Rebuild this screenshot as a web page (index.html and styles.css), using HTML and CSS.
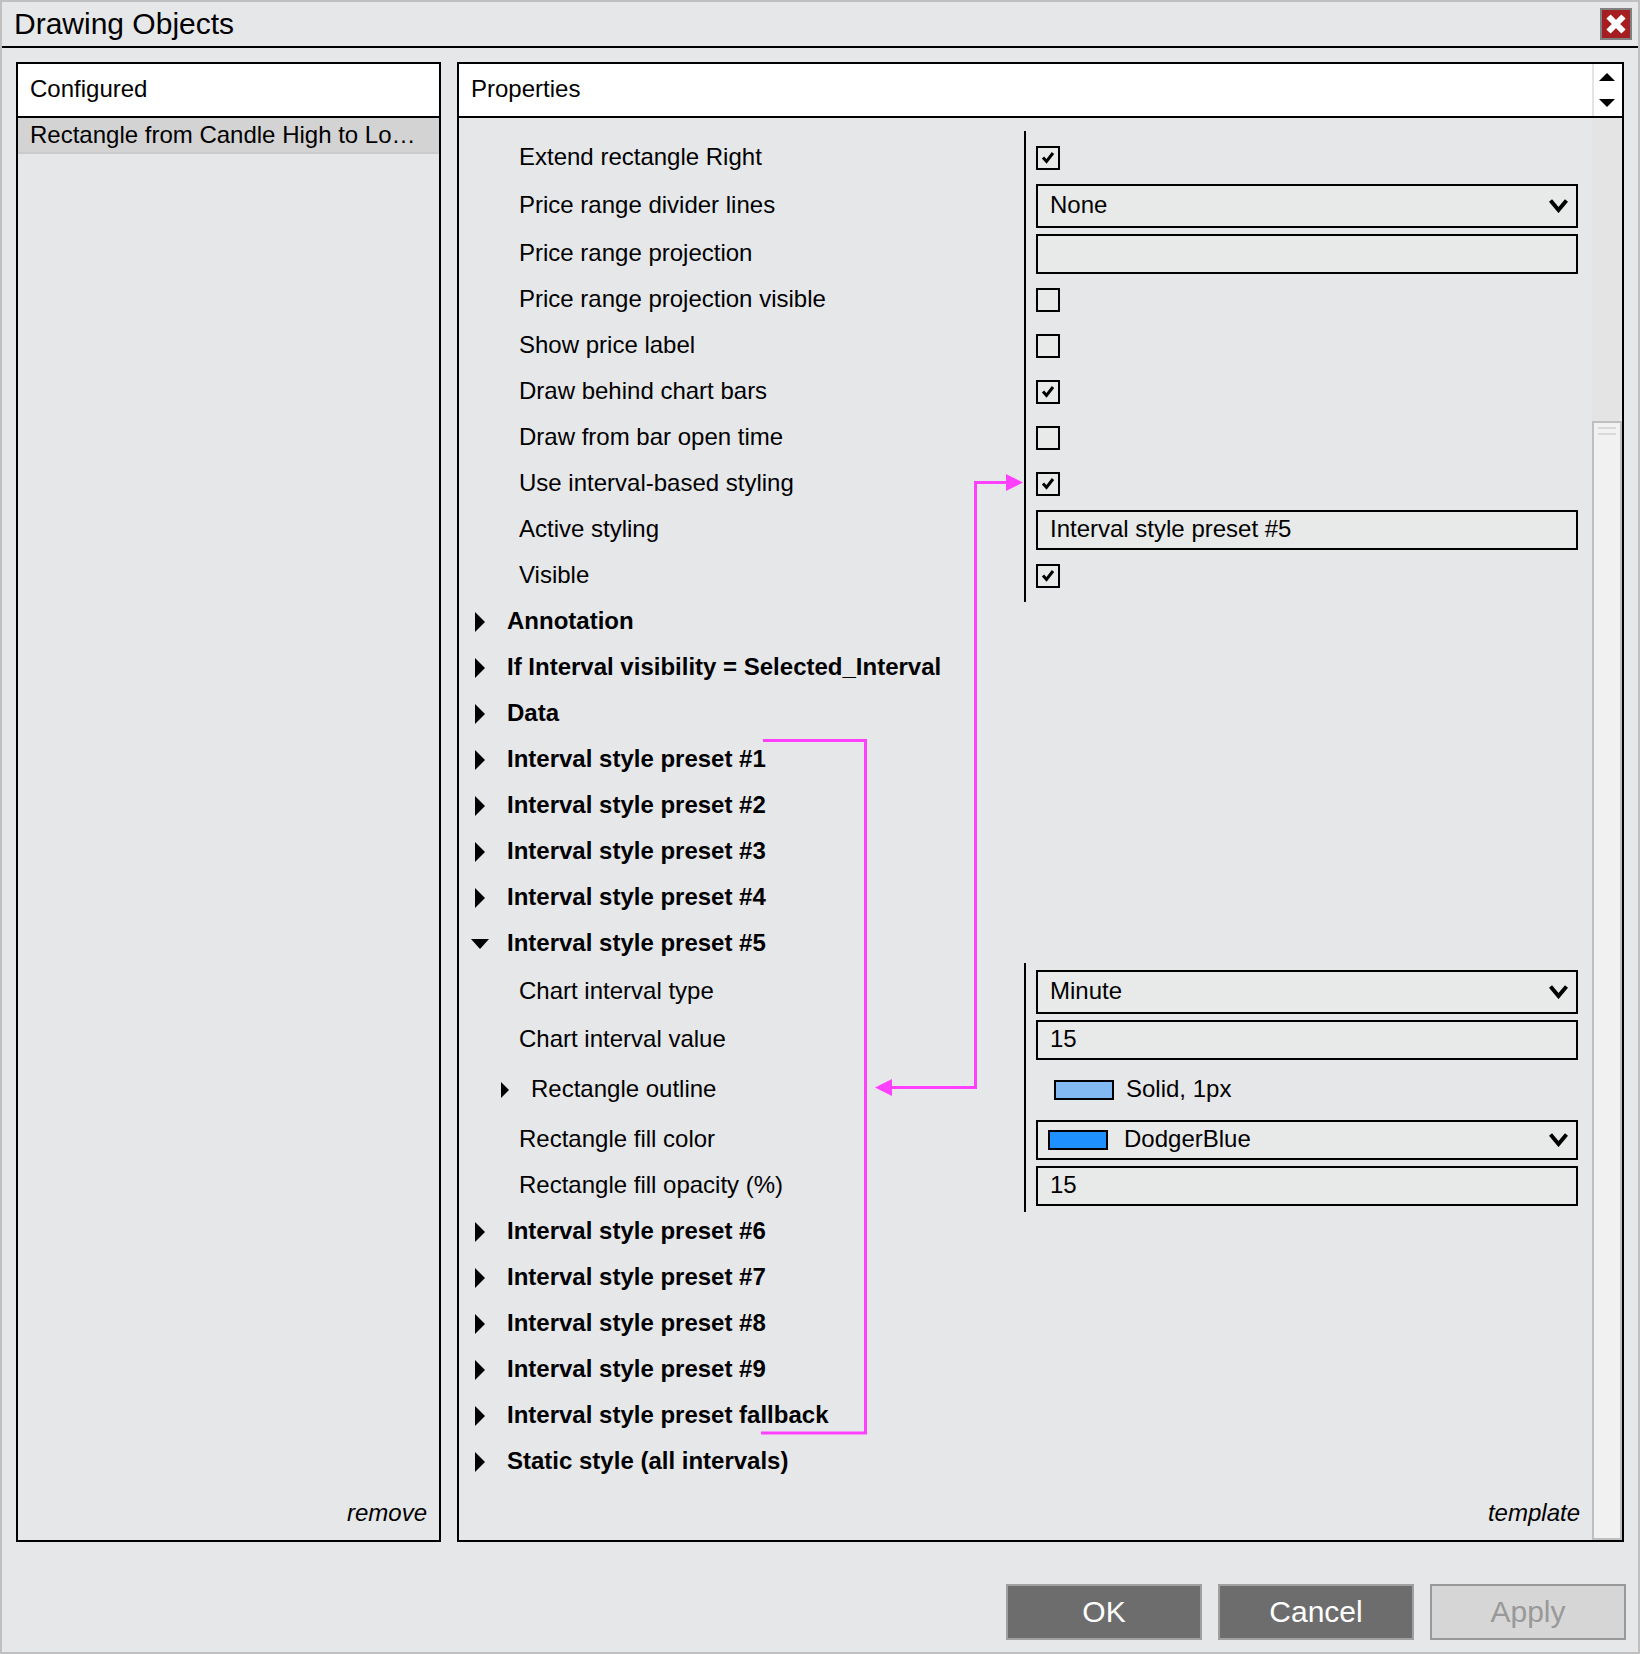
FILE: index.html
```html
<!DOCTYPE html>
<html lang="en">
<head>
  <meta charset="UTF-8">
  <title>Drawing Objects</title>
  <link rel="stylesheet" href="styles.css">
</head>
<body>
  <div class="window">
    <header class="title-bar">
      <h1>Drawing Objects</h1>
      <button type="button" class="close" aria-label="Close">
        <svg width="20" height="20" viewBox="0 0 20 20"><path d="M2.5 2.5L17.5 17.5M17.5 2.5L2.5 17.5" stroke="#fff" stroke-width="6"/></svg>
      </button>
    </header>

    <main class="panels">
      <section class="panel configured">
        <h2 class="panel-header">Configured</h2>
        <ul class="object-list">
          <li class="selected">Rectangle from Candle High to Lo…</li>
        </ul>
        <div class="panel-footer"><a href="#">remove</a></div>
      </section>

      <section class="panel properties">
        <div class="properties-main">
          <h2 class="panel-header">Properties</h2>
          <div class="property-list">
            <div class="group">
              <div class="row"><label for="extendRight">Extend rectangle Right</label><input type="checkbox" id="extendRight" checked></div>
              <div class="row row-select">
                <label for="dividerLines">Price range divider lines</label>
                <select id="dividerLines"><option>None</option></select>
              </div>
              <div class="row"><label for="projection">Price range projection</label><input type="text" id="projection"></div>
              <div class="row"><label for="projectionVisible">Price range projection visible</label><input type="checkbox" id="projectionVisible"></div>
              <div class="row"><label for="priceLabel">Show price label</label><input type="checkbox" id="priceLabel"></div>
              <div class="row"><label for="drawBehind">Draw behind chart bars</label><input type="checkbox" id="drawBehind" checked></div>
              <div class="row"><label for="openTime">Draw from bar open time</label><input type="checkbox" id="openTime"></div>
              <div class="row"><label for="intervalStyling">Use interval-based styling</label><input type="checkbox" id="intervalStyling" checked></div>
              <div class="row"><label for="activeStyling">Active styling</label><input type="text" id="activeStyling" value="Interval style preset #5"></div>
              <div class="row"><label for="visible">Visible</label><input type="checkbox" id="visible" checked></div>
            </div>

            <button type="button" class="category">Annotation</button>
            <button type="button" class="category">If Interval visibility = Selected_Interval</button>
            <button type="button" class="category">Data</button>
            <button type="button" class="category">Interval style preset #1</button>
            <button type="button" class="category">Interval style preset #2</button>
            <button type="button" class="category">Interval style preset #3</button>
            <button type="button" class="category">Interval style preset #4</button>
            <button type="button" class="category open" aria-expanded="true">Interval style preset #5</button>

            <div class="group">
              <div class="row row-select">
                <label for="intervalType">Chart interval type</label>
                <select id="intervalType"><option>Minute</option></select>
              </div>
              <div class="row"><label for="intervalValue">Chart interval value</label><input type="text" id="intervalValue" value="15"></div>
              <div class="row row-outline">
                <button type="button" class="sub-category">Rectangle outline</button>
                <div class="outline-value"><span class="swatch light"></span><span class="outline-text">Solid, 1px</span></div>
              </div>
              <div class="row">
                <label for="fillColor">Rectangle fill color</label>
                <div class="color-select">
                  <select id="fillColor"><option>DodgerBlue</option></select>
                  <span class="swatch"></span>
                </div>
              </div>
              <div class="row"><label for="fillOpacity">Rectangle fill opacity (%)</label><input type="text" id="fillOpacity" value="15"></div>
            </div>

            <button type="button" class="category">Interval style preset #6</button>
            <button type="button" class="category">Interval style preset #7</button>
            <button type="button" class="category">Interval style preset #8</button>
            <button type="button" class="category">Interval style preset #9</button>
            <button type="button" class="category">Interval style preset fallback</button>
            <button type="button" class="category">Static style (all intervals)</button>

            <!-- Arrows from the presets to the interval styling checkbox -->
            <svg class="callout" width="566" height="1320" viewBox="0 0 566 1320">
              <path d="M304 622.5H406.5V1315H302M549 364.5H516.5V969.5H432" fill="none" stroke="#ff40ff" stroke-width="3"/>
              <path d="M547 356L564 364.5L547 373ZM433 961L416 969.5L433 978Z" fill="#ff40ff"/>
            </svg>
          </div>
          <div class="panel-footer"><a href="#">template</a></div>
        </div>

        <div class="scrollbar">
          <div class="scroll-arrows">
            <button type="button" aria-label="Scroll up"><svg width="16" height="8" viewBox="0 0 16 8"><path d="M0 8L8 0L16 8Z"/></svg></button>
            <button type="button" aria-label="Scroll down"><svg width="16" height="8" viewBox="0 0 16 8"><path d="M0 0L8 8L16 0Z"/></svg></button>
          </div>
          <div class="track"></div>
          <div class="thumb"></div>
        </div>
      </section>
    </main>

    <footer class="actions">
      <button type="button">OK</button>
      <button type="button">Cancel</button>
      <button type="button" disabled>Apply</button>
    </footer>
  </div>
</body>
</html>
```
FILE: styles.css
```css
*, *::before {
  box-sizing: border-box;
}

body {
  margin: 0;
  font-family: "Liberation Sans", Arial, sans-serif;
  font-size: 24px;
  line-height: 28px;
  color: #000;
}

button, input, select {
  font: inherit;
  color: inherit;
  margin: 0;
}

.window {
  display: flex;
  flex-direction: column;
  min-height: 100vh;
  border: 2px solid #c0c0c0;
  background: #e6e7e9;
}

/* Title bar */
.title-bar {
  display: flex;
  justify-content: space-between;
  align-items: center;
  height: 46px;
  padding: 0 6px 0 12px;
  border-bottom: 2px solid #000;
}

h1 {
  margin: 0;
  font-size: 30px;
  font-weight: normal;
}

.close {
  display: flex;
  align-items: center;
  justify-content: center;
  width: 32px;
  height: 32px;
  padding: 0;
  border: 2px solid #808080;
  background: #a51e22;
}

/* Panels */
.panels {
  flex: 1;
  display: flex;
  gap: 16px;
  padding: 14px 14px 0;
}

.panel {
  display: flex;
  border: 2px solid #000;
}

.configured {
  flex-direction: column;
  width: 425px;
}

.properties {
  flex: 1;
}

.properties-main {
  flex: 1;
  display: flex;
  flex-direction: column;
}

.panel-header {
  display: flex;
  align-items: center;
  height: 54px;
  margin: 0;
  padding: 0 12px 2px;
  font-size: 24px;
  font-weight: normal;
  background: #fff;
  border-bottom: 2px solid #000;
}

.object-list {
  list-style: none;
  margin: 0;
  padding: 0;
}

.selected {
  height: 36px;
  padding: 0 12px;
  line-height: 34px;
  white-space: nowrap;
  overflow: hidden;
  text-overflow: ellipsis;
  background: #d3d3d3;
  border-bottom: 2px solid #cbcbcb;
}

.panel-footer {
  margin-top: auto;
  padding: 0 12px 13px;
  text-align: right;
}

.panel-footer a {
  color: #000;
  font-style: italic;
  text-decoration: none;
}

/* Property rows */
.property-list {
  position: relative;
  padding-top: 17px;
}

.group {
  position: relative;
}

.group::before {
  content: "";
  position: absolute;
  top: -4px;
  bottom: -3px;
  left: 565px;
  width: 2px;
  background: #000;
}

.row {
  display: grid;
  grid-template-columns: 517px 1fr;
  align-items: center;
  height: 46px;
  padding: 0 14px 0 60px;
}

.row-select {
  height: 50px;
}

.row-outline {
  height: 54px;
}

.row label, .outline-text {
  padding-bottom: 2px;
}

input[type="text"], select {
  width: 100%;
  height: 40px;
  padding: 0 12px 2px;
  border: 2px solid #000;
  border-radius: 0;
  background: #e8eae9;
}

select {
  appearance: none;
  background: #e8eae9 url('data:image/svg+xml,<svg xmlns="http://www.w3.org/2000/svg" width="19" height="14"><path d="M1.5 1.5L9.5 11L17.5 1.5" fill="none" stroke="black" stroke-width="4"/></svg>') no-repeat right 8px center;
}

.row-select select {
  height: 44px;
}

input[type="checkbox"] {
  appearance: none;
  width: 24px;
  height: 24px;
  border: 2px solid #000;
  background: #e8eae9;
}

input[type="checkbox"]:checked {
  background: #e8eae9 url('data:image/svg+xml,<svg xmlns="http://www.w3.org/2000/svg" width="20" height="20"><path d="M5 9.5L8.5 13.5L15 5" fill="none" stroke="black" stroke-width="3"/></svg>') no-repeat center;
}

.swatch {
  width: 60px;
  height: 20px;
  border: 2px solid #000;
  background: #1e90ff;
}

.swatch.light {
  background: #82b9f3;
}

.outline-value {
  display: flex;
  align-items: center;
  gap: 12px;
  padding-left: 18px;
}

.color-select {
  position: relative;
}

.color-select select {
  display: block;
  padding-left: 86px;
}

.color-select .swatch {
  position: absolute;
  top: 10px;
  left: 12px;
}

/* Expandable headings */
.category, .sub-category {
  display: flex;
  align-items: center;
  padding: 0 0 2px;
  border: 0;
  background: none;
  text-align: left;
}

.category {
  width: 100%;
  height: 46px;
  padding-left: 12px;
  font-weight: bold;
}

.category::before {
  content: "";
  width: 18px;
  height: 20px;
  margin: 2px 18px 0 0;
  background: #000;
  clip-path: polygon(4px 0, 14px 10px, 4px 20px);
}

.category.open::before {
  clip-path: polygon(0 5px, 18px 5px, 9px 15px);
}

.sub-category {
  margin-left: -18px;
}

.sub-category::before {
  content: "";
  width: 8px;
  height: 16px;
  margin: 2px 22px 0 0;
  background: #000;
  clip-path: polygon(0 0, 100% 50%, 0 100%);
}

.callout {
  position: absolute;
  top: 0;
  left: 0;
  pointer-events: none;
}

/* Scrollbar */
.scrollbar {
  display: flex;
  flex-direction: column;
  width: 30px;
  background: #e4e4e4;
}

.scroll-arrows {
  display: flex;
  flex-direction: column;
  align-items: center;
  justify-content: center;
  gap: 18px;
  height: 54px;
  background: linear-gradient(to right, #e4e4e4 2px, #fff 2px);
  border-bottom: 2px solid #000;
}

.scroll-arrows button {
  display: flex;
  padding: 0;
  border: 0;
  background: none;
}

.track {
  flex: 303;
}

.thumb {
  flex: 1107;
  padding: 4px;
  border: 2px solid #bfbfbf;
  background: #f1f1f1;
}

.thumb::before {
  content: "";
  display: block;
  height: 8px;
  border: solid #d9d9d9;
  border-width: 2px 0;
}

/* Bottom buttons */
.actions {
  display: flex;
  justify-content: flex-end;
  gap: 16px;
  padding: 42px 12px 12px;
}

.actions button {
  width: 196px;
  height: 56px;
  padding: 0;
  border: 2px solid #a0a0a0;
  background: #6d6d6d;
  color: #fff;
  font-size: 30px;
}

.actions button:disabled {
  border-color: #999;
  background: #d6d6d6;
  color: #999;
}
```
